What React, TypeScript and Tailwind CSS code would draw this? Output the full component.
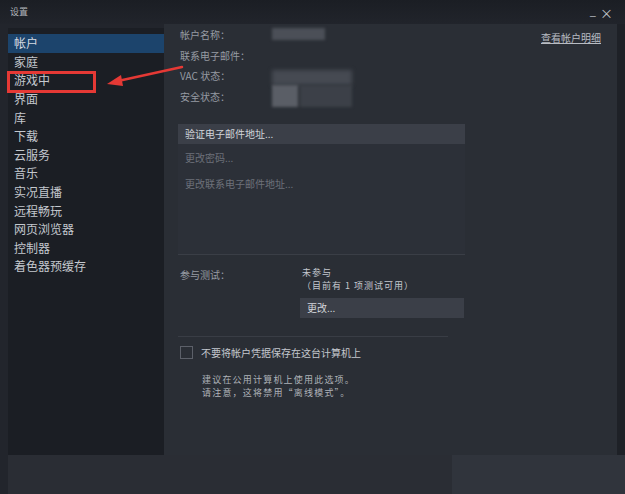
import React from "react";

const menu = [
  "帐户",
  "家庭",
  "游戏中",
  "界面",
  "库",
  "下载",
  "云服务",
  "音乐",
  "实况直播",
  "远程畅玩",
  "网页浏览器",
  "控制器",
  "着色器预缓存",
];

const font = { fontFamily: '"Noto Sans CJK SC", "Noto Sans", sans-serif' };

function Sidebar() {
  return (
    <div className="mt-[4px] w-[156px] bg-[#1b1e24] pt-[6px]">
      {menu.map((m, i) => (
        <div
          key={m}
          className={
            "flex h-[18.6px] items-center pl-[6px] text-[12px] leading-none " +
            (i === 0 ? "bg-[#1c446c] text-[#d6dbe2]" : "text-[#c4c8ce]")
          }
        >
          {m}
        </div>
      ))}
    </div>
  );
}

function InfoRow({ label, children }: { label: string; children?: React.ReactNode }) {
  return (
    <div className="relative flex h-[20.7px] items-center">
      <span className="w-[94px] pl-[2px] text-[10px] text-[#969ba3]">{label}</span>
      {children}
    </div>
  );
}

function Main() {
  return (
    <div className="relative flex flex-1 flex-col bg-[#2a2e35] pl-[14px]">
      <div className="absolute right-[16px] top-[6px] text-[10px] text-[#b8bcc3] underline">查看帐户明细</div>

      <InfoRow label="帐户名称：">
        <div className="h-[12px] w-[53px] bg-[#4b4f57] blur-[1.5px]" />
      </InfoRow>
      <InfoRow label="联系电子邮件：" />
      <InfoRow label="VAC 状态：">
        <div className="mt-[4px] h-[15px] w-[80px] bg-[#464a52] blur-[2px]" />
      </InfoRow>
      <InfoRow label="安全状态：">
        <div className="flex h-[22px] gap-[2px] blur-[1.5px]">
          <div className="w-[26px] bg-[#5a5e66]" />
          <div className="w-[52px] bg-[#3c4048]" />
        </div>
      </InfoRow>

      <div className="mt-[17px] flex h-[20px] w-[287px] items-center bg-[#3b3f48] pl-[7px] text-[10px] text-[#d2d5da]">
        验证电子邮件地址...
      </div>
      <div className="flex h-[111px] w-[287px] flex-col border-b border-[#3a3e46] bg-[#2c3038] pt-[1px] text-[10px] text-[#6c717a]">
        <div className="flex h-[26px] items-center pl-[7px]">更改密码...</div>
        <div className="flex h-[26px] items-center pl-[7px]">更改联系电子邮件地址...</div>
      </div>

      <div className="mt-[11px] flex text-[9px] leading-[13px] tracking-[1px]">
        <span className="w-[124px] pl-[2px] pt-[2px] text-[10px] tracking-normal text-[#969ba3]">参与测试：</span>
        <div className="flex flex-col text-[#c4c8ce]">
          <span>未参与</span>
          <span>（目前有 1 项测试可用）</span>
          <div className="-ml-[2px] mt-[6px] flex h-[20px] w-[164px] items-center bg-[#3b3f48] pl-[7px] text-[10px] tracking-normal text-[#d2d5da]">
            更改...
          </div>
        </div>
      </div>

      <div className="mt-[18px] h-px w-[270px] bg-[#393d45]" />

      <div className="ml-[2px] mt-[8px] flex items-center gap-[8px]">
        <div className="h-[13px] w-[13px] border border-[#5c6069] bg-[#2a2e35]" />
        <span className="text-[10px] text-[#c4c8ce]">不要将帐户凭据保存在这台计算机上</span>
      </div>

      <div className="mt-[13px] flex flex-col pl-[24px] text-[9px] leading-[13px] tracking-[1.2px] text-[#aeb2b8]">
        <span>建议在公用计算机上使用此选项。</span>
        <span>请注意，这将禁用“离线模式”。</span>
      </div>
    </div>
  );
}

export default function App() {
  return (
    <div className="flex h-[494px] w-[625px] flex-col overflow-hidden bg-[#22252c]" style={font}>
      {/* title bar */}
      <div className="flex h-[24px] items-center justify-between bg-gradient-to-b from-[#1b1e24] to-[#21242b] pl-[10px] pr-[12px]">
        <span className="text-[9px] text-[#b0b4ba]">设置</span>
        <div className="flex items-center gap-[4px] text-[#c0c4ca]">
          <span className="mt-[-4px] text-[11px] leading-none">_</span>
          <span className="text-[13px] leading-none">×</span>
        </div>
      </div>

      <div className="flex h-[431px] pl-[8px]">
        <Sidebar />
        <Main />
        <div className="w-[8px] bg-[#1e2127]" />
      </div>

      <div className="flex flex-1">
        <div className="ml-[8px] w-[444px] bg-[#2a2d34]" />
        <div className="flex-1 bg-[#30343c]" />
      </div>

      {/* red annotation */}
      <div className="absolute left-[7px] top-[71px] h-[22px] w-[89px] border-[3px] border-[#e53935]" />
      <svg className="absolute left-0 top-0" width="625" height="494" viewBox="0 0 625 494">
        <line x1="182" y1="67" x2="118" y2="81" stroke="#e53935" strokeWidth="2.5" strokeLinecap="round" />
        <polygon points="107,84 121,75 123,86" fill="#e53935" />
      </svg>
    </div>
  );
}
